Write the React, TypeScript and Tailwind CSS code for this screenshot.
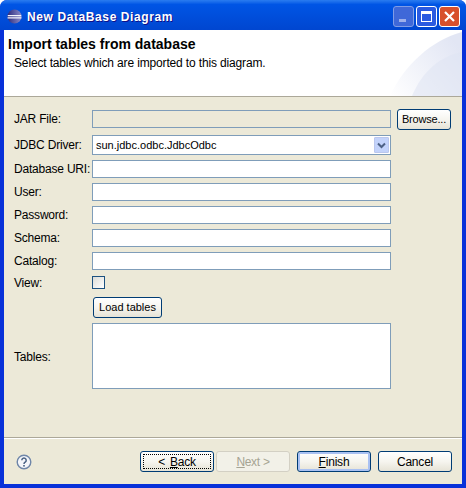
const font = { fontFamily: '"Liberation Sans", Arial, sans-serif' };

function Field({ label, disabled, className }: { label: string; disabled?: boolean; className?: string }) {
  return (
    <div className={`flex items-center h-[18px] ${className ?? ''}`}>
      <span className="w-[78px] text-[12px] text-black whitespace-nowrap tracking-[-0.2px]">{label}</span>
      <div className={`w-[299px] h-[18px] border border-[#7f9db9] ${disabled ? 'bg-[#ece9d8]' : 'bg-white'}`} />
    </div>
  );
}

function WinButton({ children, className }: { children: React.ReactNode; className?: string }) {
  return (
    <button
      className={`h-[21px] rounded-[3px] border border-[#003c74] bg-gradient-to-b from-white via-[#f6f5ef] to-[#e6e3d6] text-black flex items-center justify-center ${className ?? ''}`}
    >
      {children}
    </button>
  );
}

export default function App() {
  return (
    <div style={font} className="relative w-[466px] h-[488px] flex flex-col overflow-hidden bg-[#0831d9] rounded-t-[7px]">
      {/* title bar */}
      <div className="h-[30px] shrink-0 flex items-center pl-[7px] pr-[6px] bg-gradient-to-b from-[#2a7cf0] from-0% via-[#0055e5] via-15% to-[#0046d0] to-100%">
        <svg width="15" height="15" viewBox="0 0 16 16" className="shrink-0 mt-[3px]">
          <defs>
            <linearGradient id="orb" x1="0" y1="0" x2="1" y2="0">
              <stop offset="0" stopColor="#2c2c80" />
              <stop offset="1" stopColor="#8a8ac8" />
            </linearGradient>
          </defs>
          <circle cx="8" cy="8" r="7.5" fill="url(#orb)" />
          <path d="M.8 6.4h14.4v1.2H.8zM.6 8.8h14.8V10H.6z" fill="#f4f4fb" />
        </svg>
        <span className="ml-[5px] mt-[3px] text-[12px] font-bold text-white tracking-[0.6px] [text-shadow:1px_1px_0_#0f1089] whitespace-nowrap">
          New DataBase Diagram
        </span>
        <div className="ml-auto flex gap-[2px] mt-[3px]">
          <div className="w-[21px] h-[21px] rounded-[3px] border border-[#7f9ce6] bg-[#3f68d8] flex items-end pl-[5px] pb-[4px]">
            <div className="w-[7px] h-[3px] bg-[#9db0ea]" />
          </div>
          <div className="w-[21px] h-[21px] rounded-[3px] border border-white bg-[#2a5ae0] flex items-center justify-center">
            <div className="w-[11px] h-[11px] border border-white border-t-[3px]" />
          </div>
          <div className="w-[21px] h-[21px] rounded-[3px] border border-white bg-[#d8502c] flex items-center justify-center">
            <svg width="13" height="13" viewBox="0 0 13 13">
              <path d="M2 2l9 9M11 2l-9 9" stroke="#fff" strokeWidth="2.2" />
            </svg>
          </div>
        </div>
      </div>

      {/* client area */}
      <div className="flex-1 mx-[4px] mb-[4px] flex flex-col bg-[#ece9d8] min-h-0">
        <div className="relative h-[66px] shrink-0 bg-white pl-[4px] pt-[6px] overflow-hidden">
          <svg width="80" height="66" viewBox="0 0 80 66" className="absolute right-0 top-0">
            <defs>
              <linearGradient id="sweep" x1="0" y1="1" x2="1" y2="0.3">
                <stop offset="0" stopColor="#ffffff" />
                <stop offset="1" stopColor="#e2e6f4" />
              </linearGradient>
            </defs>
            <path d="M8 66C22 35 50 10 80 2V66z" fill="url(#sweep)" />
            <path d="M30 66C40 42 58 26 80 22V66z" fill="#dfe4f3" opacity="0.55" />
          </svg>
          <div className="relative text-[14px] font-bold text-black leading-[16px]">
            Import tables from database
          </div>
          <div className="relative mt-[3px] ml-[6px] text-[12px] text-black leading-[16px] tracking-[-0.15px]">
            Select tables which are imported to this diagram.
          </div>
        </div>
        <div className="h-[1px] bg-[#aca899] shrink-0" />

        <div className="flex-1 flex flex-col pl-[10px] pt-[13px] min-h-0">
          <div className="flex items-center h-[18px]">
            <Field label="JAR File:" disabled />
            <WinButton className="ml-[6px] w-[54px] text-[11px] tracking-[-0.2px]">Browse...</WinButton>
          </div>
          <div className="flex items-center h-[20px] mt-[7px]">
            <span className="w-[78px] text-[12px] text-black whitespace-nowrap tracking-[-0.2px]">JDBC Driver:</span>
            <div className="w-[299px] h-[20px] border border-[#7f9db9] bg-white flex items-center pl-[3px] pr-[1px] text-[11px] text-black">
              <span>sun.jdbc.odbc.JdbcOdbc</span>
              <div className="ml-auto w-[15px] h-[16px] rounded-[1px] border border-[#bac7ee] bg-[#c3d3fb] flex items-center justify-center">
                <svg width="9" height="7" viewBox="0 0 9 7">
                  <path d="M1 1.5l3.5 3.5L8 1.5" fill="none" stroke="#4d6185" strokeWidth="2" />
                </svg>
              </div>
            </div>
          </div>
          <Field label="Database URI:" className="mt-[5px]" />
          <Field label="User:" className="mt-[5px]" />
          <Field label="Password:" className="mt-[5px]" />
          <Field label="Schema:" className="mt-[5px]" />
          <Field label="Catalog:" className="mt-[5px]" />
          <div className="flex items-center h-[13px] mt-[6px]">
            <span className="w-[78px] text-[12px] text-black tracking-[-0.2px]">View:</span>
            <div className="w-[13px] h-[13px] border border-[#1c5180] bg-gradient-to-br from-[#dcdcd7] to-white" />
          </div>
          <div className="pl-[79px] mt-[8px]">
            <WinButton className="w-[69px] text-[11px]">Load tables</WinButton>
          </div>
          <div className="flex mt-[5px]">
            <div className="w-[78px] self-center mt-[1px] text-[12px] text-black tracking-[-0.2px]">Tables:</div>
            <div className="w-[299px] h-[66px] border border-[#7f9db9] bg-white" />
          </div>
        </div>

        <div className="h-[1px] bg-[#aca899] shrink-0" />
        <div className="h-[1px] bg-white shrink-0" />
        <div className="h-[45px] shrink-0 flex items-start pt-[12px] pl-[12px]">
          <svg width="16" height="16" viewBox="0 0 16 16" className="mt-[3px]">
            <circle cx="8" cy="8" r="6.8" fill="#f4f6fa" stroke="#6f86a8" strokeWidth="1.4" />
            <path d="M5.8 6.2a2.2 2.2 0 1 1 3.4 1.9c-.8.5-1.2.9-1.2 1.8" fill="none" stroke="#4a6284" strokeWidth="1.5" />
            <rect x="7.2" y="11" width="1.6" height="1.6" fill="#4a6284" />
          </svg>
          <WinButton className="ml-[108px] w-[74px] relative text-[12px] tracking-[-0.2px]">
            <span className="absolute inset-[2px] border border-dotted border-black" />
            <span className="mr-[5px]">&lt;</span>
            <span><u>B</u>ack</span>
          </WinButton>
          <button className="ml-[2px] w-[74px] h-[21px] rounded-[3px] border border-[#d3d0c4] bg-[#f2f1e8] text-[12px] text-[#a6a493] tracking-[-0.3px]">
            <u>N</u>ext &gt;
          </button>
          <WinButton className="ml-[7px] w-[74px] text-[12px] tracking-[-0.2px] shadow-[inset_0_0_0_2px_#a9c1f2]">
            <span><u>F</u>inish</span>
          </WinButton>
          <WinButton className="ml-[7px] w-[74px] text-[12px] tracking-[-0.2px]">Cancel</WinButton>
        </div>
      </div>
    </div>
  );
}
